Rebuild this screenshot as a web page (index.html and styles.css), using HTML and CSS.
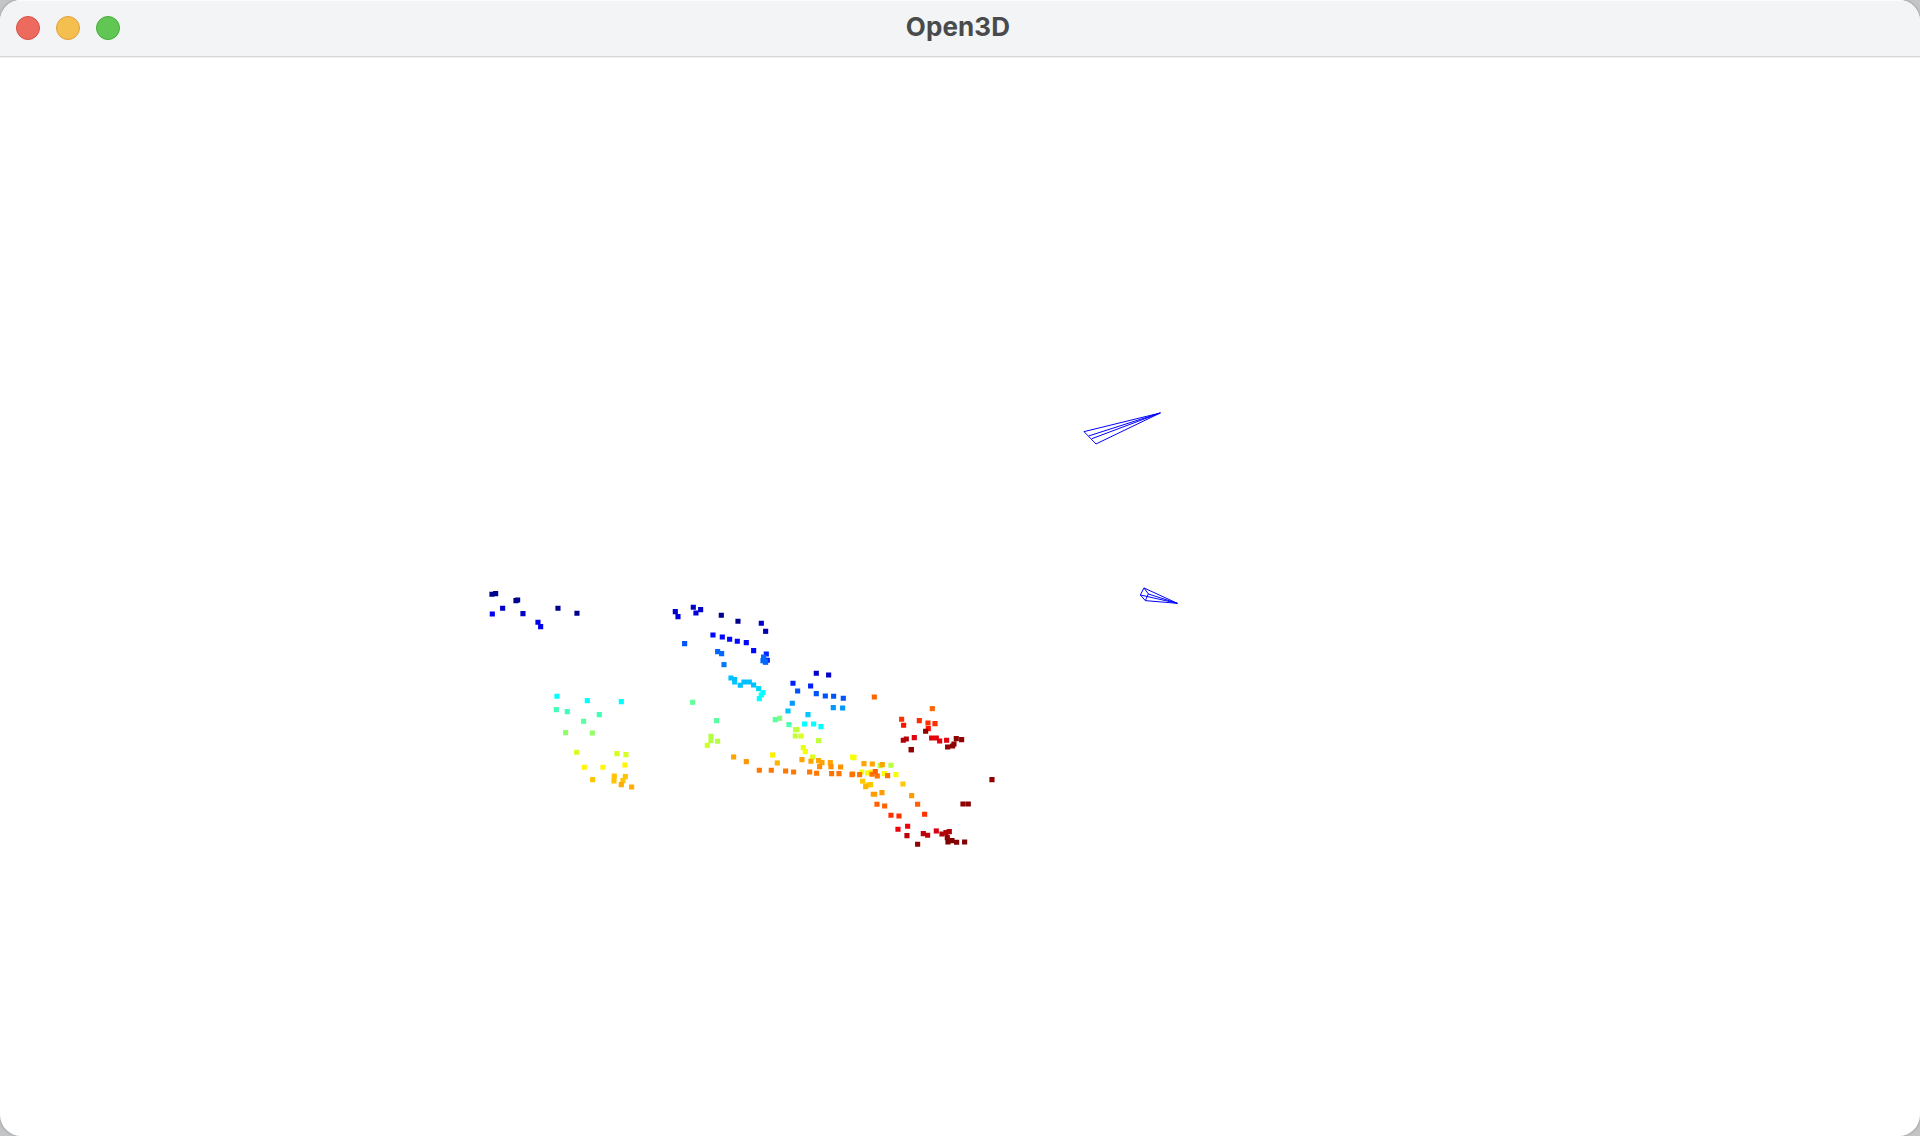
FILE: index.html
```html
<!DOCTYPE html>
<html lang="en">
<head>
<meta charset="utf-8">
<title>Open3D</title>
<link rel="stylesheet" href="styles.css">
</head>
<body>
<main class="window">
<header class="titlebar">
<div class="controls"><span class="dot close"></span><span class="dot minimize"></span><span class="dot zoom"></span></div>
<h1 class="title">Open3D</h1>
<div class="balance"></div>
</header>
<svg class="viewport" viewBox="0 58 1920 1078" width="1920" height="1078">
<!-- camera frustums -->
<g class="camera" transform="translate(1060 400.3) scale(.33333)">
<path d="M301 38L72 94M301 38L86 107M301 38L96 115M301 38L108 131M72 94L108 131"/>
<path d="M352 609L252 563M352 609L241 584M352 609L265 581M352 609L256 601M252 563L241 584L256 601L265 581Z"/>
</g>
<!-- point cloud, coloured by depth -->
<g transform="translate(.3 .3)">
<g class="points" transform="translate(480 580) scale(.33333)">
<path stroke="#00008f" d="M35 42h0M46 40h0M107 61h0M112 59h0M233 84h0M290 99h0"/>
<path stroke="#0000c8" d="M67 84h0M128 100h0"/>
<path stroke="#0000f0" d="M36 101h0M173 126h0M181 139h0"/>
</g>
<g class="points" transform="translate(540 680) scale(.33333)">
<path stroke="#0ff" d="M50 48h0M141 61h0M243 64h0"/>
<path stroke="#40ffb8" d="M48 88h0M81 94h0M177 103h0"/>
<path stroke="#5affa0" d="M130 123h0"/>
<path stroke="#90ff68" d="M76 157h0M156 158h0"/>
<path stroke="#d4ff22" d="M109 216h0M230 220h0M257 223h0"/>
<path stroke="#fff600" d="M132 261h0M188 261h0M254 254h0"/>
<path stroke="#ffc400" d="M157 298h0M222 287h0M255 289h0M221 302h0M248 301h0"/>
<path stroke="#ffae00" d="M243 313h0M274 320h0"/>
</g>
<g class="points" transform="translate(660 590) scale(.33333)">
<path stroke="#00008f" d="M183 75h0M233 93h0"/>
<path stroke="#0000b0" d="M316 123h0"/>
<path stroke="#0000c8" d="M45 64h0M99 51h0M121 58h0M303 99h0M468 249h0M505 254h0"/>
<path stroke="#0000dc" d="M53 79h0M107 68h0"/>
<path stroke="#0008ff" d="M158 134h0M186 140h0M208 147h0M231 153h0M258 157h0M280 181h0"/>
<path stroke="#0020ff" d="M318 191h0M398 279h0M451 287h0M321 210h0"/>
<path stroke="#0054ff" d="M73 160h0M412 302h0M468 310h0M495 317h0M520 318h0M549 324h0M316 216h0"/>
<path stroke="#0068ff" d="M172 184h0M184 190h0M310 200h0M308 211h0M315 214h0"/>
<path stroke="#0078ff" d="M191 223h0"/>
<path stroke="#0098ff" d="M396 339h0M519 352h0M547 353h0"/>
<path stroke="#00c0ff" d="M212 263h0M223 268h0M223 275h0M240 285h0M251 275h0M259 275h0M267 275h0M280 284h0"/>
<path stroke="#00d8ff" d="M295 295h0"/>
<path stroke="#0ff" d="M308 307h0M303 314h0M297 325h0"/>
<path stroke="#64ff98" d="M97 336h0"/>
</g>
<g class="points" transform="translate(680 690) scale(.33333)">
<path stroke="#5affa0" d="M109 91h0M285 88h0"/>
<path stroke="#80ff78" d="M298 84h0"/>
<path stroke="#b4ff44" d="M92 138h0M92 151h0M112 153h0"/>
<path stroke="#d0ff28" d="M81 165h0"/>
<path stroke="#ffa400" d="M160 200h0"/>
<path stroke="#ff9400" d="M198 214h0"/>
<path stroke="#ff7800" d="M237 240h0M273 240h0M316 242h0M340 245h0M388 245h0M409 249h0"/>
<path stroke="#fff000" d="M277 194h0"/>
<path stroke="#ffb400" d="M291 218h0"/>
</g>
<g class="points" transform="translate(770 690) scale(.33333)">
<path stroke="#00c8ff" d="M53 62h0M113 73h0"/>
<path stroke="#0ff" d="M103 101h0M130 101h0M152 109h0"/>
<path stroke="#4dffb0" d="M56 103h0"/>
<path stroke="#c0ff38" d="M76 118h0M80 118h0M75 137h0M145 151h0"/>
<path stroke="#d8ff20" d="M92 137h0M127 200h0"/>
<path stroke="#e8ff10" d="M99 172h0"/>
<path stroke="#faff00" d="M105 184h0M247 200h0M251 202h0M274 245h0M292 248h0M300 246h0M342 250h0M377 253h0"/>
<path stroke="#b8ff40" d="M330 226h0M362 225h0"/>
<path stroke="#ffa400" d="M95 208h0M122 213h0M145 211h0M155 217h0M180 217h0M281 220h0M306 221h0M336 223h0"/>
<path stroke="#ff9000" d="M148 229h0M182 229h0M211 230h0"/>
<path stroke="#ff7400" d="M184 250h0M206 250h0M245 253h0M247 251h0M268 253h0M305 252h0M321 257h0M352 256h0"/>
<path stroke="#ff6400" d="M315 244h0M312 20h0"/>
<path stroke="#ffc800" d="M277 273h0M293 284h0M301 283h0M398 281h0"/>
<path stroke="#ffb400" d="M286 289h0"/>
</g>
<g class="points" transform="translate(840 740) scale(.33333)">
<path stroke="#ff9c00" d="M99 162h0M103 162h0M125 157h0M214 166h0"/>
<path stroke="#ff6000" d="M110 192h0M133 197h0M232 192h0"/>
<path stroke="#ff3000" d="M152 225h0M176 227h0M253 222h0"/>
<path stroke="#f00008" d="M173 267h0M202 258h0"/>
<path stroke="#bc0008" d="M200 286h0M249 280h0M262 285h0"/>
<path stroke="#8f0000" d="M232 312h0M213 28h0"/>
<path stroke="#d80010" d="M288 272h0"/>
</g>
<g class="points" transform="translate(880 680) scale(.33333)">
<path stroke="#ff6800" d="M156 85h0"/>
<path stroke="#ff3000" d="M64 117h0M117 121h0M143 128h0M164 130h0"/>
<path stroke="#ff1000" d="M70 135h0M144 145h0"/>
<path stroke="#e4000c" d="M102 172h0M154 173h0M161 173h0M168 173h0M178 182h0M199 180h0"/>
<path stroke="#b00008" d="M69 180h0M78 176h0M185 461h0M197 457h0M207 454h0"/>
<path stroke="#8f0000" d="M136 153h0M93 208h0M202 200h0M217 197h0M221 191h0M228 175h0M244 178h0M335 298h0M248 371h0M264 371h0M201 472h0"/>
<path stroke="#800000" d="M203 485h0M215 481h0M229 486h0M253 485h0"/>
</g>
</g>
</svg>
</main>
</body>
</html>
```
FILE: styles.css
```css
body {
  margin: 0;
  background: #c4c5c6;
  font-family: Inter, "Liberation Sans", sans-serif;
}

.window {
  width: 1920px;
  height: 1136px;
  overflow: hidden;
  border-radius: 21px;
  background: #fff;
  box-shadow: 0 0 3px #888;
}

.titlebar {
  display: grid;
  grid-template-columns: 1fr auto 1fr;
  align-items: center;
  box-sizing: border-box;
  height: 58px;
  padding: 0 16px 2px;
  background: #f2f4f6;
  border-bottom: 1px solid #efefef;
  box-shadow: inset 0 -1px #d7d8d9, inset 0 1px #fafbfb;
}

.controls {
  display: flex;
  gap: 16px;
}

.dot {
  box-sizing: border-box;
  width: 24px;
  height: 24px;
  border: 1px solid;
  border-radius: 50%;
}

.close {
  background: #ed6a5e;
  border-color: #d94f45;
}

.minimize {
  background: #f5bf4f;
  border-color: #dba23a;
}

.zoom {
  background: #61c654;
  border-color: #46ac38;
}

.title {
  margin: 0 4px 2px 0;
  color: #494a4b;
  font-size: 26px;
  font-weight: 700;
  line-height: 32px;
  letter-spacing: .1px;
}

.viewport {
  display: block;
}

.camera {
  fill: none;
  stroke: #00f;
  stroke-width: 3;
}

.points {
  fill: none;
  stroke-width: 15.4;
  stroke-linecap: square;
}
```
